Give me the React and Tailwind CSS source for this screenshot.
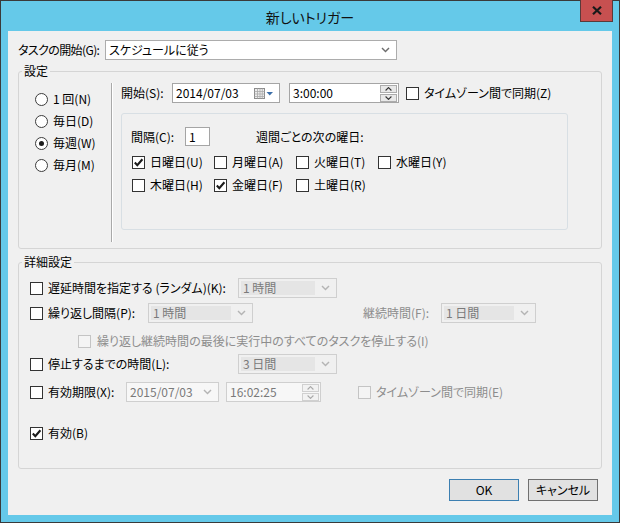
import React from 'react';
import clsx from 'clsx';

const Check = ({ checked, disabled }) => (
  <span
    className={clsx(
      'w-[13px] h-[13px] border flex items-center justify-center shrink-0',
      disabled ? 'border-[#c4c4c4] bg-[#f4f4f4]' : 'border-[#333333] bg-white'
    )}
  >
    {checked && (
      <svg width="11" height="11" viewBox="0 0 11 11">
        <path d="M1.8 5.6 L4.3 8.2 L9.4 2.2" stroke="#1b1b1b" strokeWidth="2.1" fill="none" />
      </svg>
    )}
  </span>
);

const Radio = ({ on }) => (
  <span className="w-[13px] h-[13px] rounded-full border border-[#3c3c3c] bg-white flex items-center justify-center shrink-0">
    {on && <span className="w-[5px] h-[5px] rounded-full bg-[#1b1b1b]" />}
  </span>
);

const Chevron = ({ light }) => (
  <svg width="9" height="6" viewBox="0 0 9 6" className="shrink-0">
    <path d="M1 1 L4.5 4.6 L8 1" stroke={light ? '#b4b4b4' : '#6d6d6d'} strokeWidth="1.4" fill="none" />
  </svg>
);

const Spin = ({ disabled }) => {
  const btn = clsx(
    'h-[8px] w-[17px] border flex items-center justify-center',
    disabled ? 'border-[#d0d0d0] bg-[#f2f2f2]' : 'border-[#acacac] bg-[#e8e8e8]'
  );
  const stroke = disabled ? '#a8a8a8' : '#333333';
  return (
    <div className="flex flex-col gap-[1px] mr-[1px]">
      <div className={btn}>
        <svg width="7" height="4" viewBox="0 0 7 4">
          <path d="M0.6 3.5 L3.5 0.6 L6.4 3.5" stroke={stroke} strokeWidth="1.1" fill="none" />
        </svg>
      </div>
      <div className={btn}>
        <svg width="7" height="4" viewBox="0 0 7 4">
          <path d="M0.6 0.5 L3.5 3.4 L6.4 0.5" stroke={stroke} strokeWidth="1.1" fill="none" />
        </svg>
      </div>
    </div>
  );
};

// disabled combo box as drawn by Win8
const DisabledSelect = ({ value, className }) => (
  <div className={clsx('h-[20px] border border-[#cfcfcf] bg-[#f0f0f0] flex items-center p-[2px] gap-[6px] pr-[6px] shrink-0', className)}>
    <div className="flex-1 h-full bg-[#e5e5e5] pl-[2px] text-[#7a7a7a] leading-[14px]">{value}</div>
    <Chevron light />
  </div>
);

const CheckRow = ({ checked, disabled, label, className }) => (
  <div className={clsx('flex items-center gap-[5px] shrink-0', className)}>
    <Check checked={checked} disabled={disabled} />
    <span className={clsx(disabled && 'text-[#8d8d8d]')}>{label}</span>
  </div>
);

const Group = ({ title, className, children }) => (
  <div className={clsx('relative border border-[#d5d5d5] rounded-[3px]', className)}>
    <span className="absolute left-[3px] -top-[9px] px-[2px] bg-[#f0f0f0] leading-[16px]">{title}</span>
    {children}
  </div>
);

const App = () => {
  const days = [
    [['日曜日(U)', true], ['月曜日(A)', false], ['火曜日(T)', false], ['水曜日(Y)', false]],
    [['木曜日(H)', false], ['金曜日(F)', true], ['土曜日(R)', false]],
  ];

  return (
    <div className="w-[620px] h-[523px] bg-[#65c9e9] border border-[#3a3a3a] relative flex flex-col whitespace-nowrap text-[12px] leading-[16px] text-black font-['Noto_Sans_CJK_JP','Meiryo_UI',sans-serif] [font-feature-settings:'palt']">
      {/* title bar */}
      <div className="h-[30px] flex items-center justify-center pt-[2px] text-[14px] text-[#111]">新しいトリガー</div>
      <button className="absolute -top-[1px] right-[6px] w-[33px] h-[22px] bg-[#c75050] border border-[#5a3a3a] border-t-0 flex items-center justify-center">
        <svg width="10" height="9" viewBox="0 0 10 9">
          <path d="M1 0.8 L9 8.2 M9 0.8 L1 8.2" stroke="#1a1a1a" strokeWidth="2.2" />
        </svg>
      </button>

      {/* client area */}
      <div className="mx-[7px] h-[484px] bg-[#f0f0f0] pt-[9px] px-[10px] flex flex-col">
        <div className="h-[20px] flex items-center">
          <span className="w-[87px] shrink-0 tracking-[-0.6px]">タスクの開始(G):</span>
          <div className="w-[292px] h-[20px] border border-[#acacac] bg-white flex items-center pl-[3px] pr-[6px]">
            <span className="flex-1">スケジュールに従う</span>
            <Chevron />
          </div>
        </div>

        {/* 設定 */}
        <Group title="設定" className="mt-[11px] h-[178px] flex">
          <div className="w-[92px] pt-[16px] pl-[16px] flex flex-col shrink-0">
            {[['1 回(N)', false], ['毎日(D)', false], ['毎週(W)', true], ['毎月(M)', false]].map(([label, on]) => (
              <div key={label} className="h-[22px] flex items-center gap-[5px]">
                <Radio on={on} />
                <span>{label}</span>
              </div>
            ))}
          </div>
          <div className="mt-[11px] h-[159px] w-[2px] border-l border-[#a9a9a9] border-r border-r-white" />
          <div className="ml-[8px] pt-[11px] flex flex-col">
            <div className="h-[20px] flex items-center">
              <span className="w-[51px] shrink-0">開始(S):</span>
              <div className="w-[108px] h-[20px] border border-[#a5a5a5] bg-white flex items-center pl-[3px] pr-[5px]">
                <span className="flex-1">2014/07/03</span>
                <svg width="20" height="11" viewBox="0 0 20 11">
                  <rect x="0.5" y="0.5" width="10" height="10" fill="#ececec" stroke="#8c8c8c" />
                  <path d="M0.5 3.5 H10.5 M0.5 6 H10.5 M0.5 8.5 H10.5 M3.5 0.5 V10.5 M6 0.5 V10.5 M8.3 0.5 V10.5" stroke="#a9a9a9" strokeWidth="0.8" />
                  <polygon points="12.5,4 19,4 15.75,7.5" fill="#3b6ea8" />
                </svg>
              </div>
              <div className="ml-[9px] w-[110px] h-[20px] border border-[#a5a5a5] bg-white flex items-center pl-[3px]">
                <span className="flex-1">3:00:00</span>
                <Spin />
              </div>
              <CheckRow label="タイムゾーン間で同期(Z)" className="ml-[7px]" />
            </div>

            <div className="mt-[10px] w-[447px] h-[117px] border border-[#d8dfe4] rounded-[3px] pt-[13px] pl-[9px] flex flex-col">
              <div className="h-[19px] flex items-center">
                <span className="w-[54px] shrink-0">間隔(C):</span>
                <div className="w-[25px] h-[19px] border border-[#a5a5a5] bg-white pl-[3px] flex items-center">1</div>
                <span className="ml-[46px]">週間ごとの次の曜日:</span>
              </div>
              {days.map((row, i) => (
                <div key={i} className={clsx('h-[20px] flex items-center pl-[1px]', i === 0 ? 'mt-[6px]' : 'mt-[3px]')}>
                  {row.map(([label, checked]) => (
                    <CheckRow key={label} label={label} checked={checked} className="w-[82px]" />
                  ))}
                </div>
              ))}
            </div>
          </div>
        </Group>

        {/* 詳細設定 */}
        <Group title="詳細設定" className="mt-[13px] h-[207px] pt-[15px] pl-[11px] flex flex-col">
          <div className="h-[20px] flex items-center">
            <CheckRow label="遅延時間を指定する (ランダム)(K):" className="w-[208px]" />
            <DisabledSelect value="1 時間" className="w-[99px]" />
          </div>
          <div className="mt-[5px] h-[20px] flex items-center">
            <CheckRow label="繰り返し間隔(P):" className="w-[118px]" />
            <DisabledSelect value="1 時間" className="w-[105px]" />
            <span className="ml-[110px] w-[78px] shrink-0 text-[#8d8d8d]">継続時間(F):</span>
            <DisabledSelect value="1 日間" className="w-[95px]" />
          </div>
          <div className="mt-[8px] h-[20px] flex items-center pl-[48px]">
            <CheckRow label="繰り返し継続時間の最後に実行中のすべてのタスクを停止する(I)" disabled className="gap-[6px]" />
          </div>
          <div className="mt-[3px] h-[20px] flex items-center">
            <CheckRow label="停止するまでの時間(L):" className="w-[208px]" />
            <DisabledSelect value="3 日間" className="w-[99px]" />
          </div>
          <div className="mt-[8px] h-[20px] flex items-center">
            <CheckRow label="有効期限(X):" className="w-[96px]" />
            <div className="w-[93px] h-[20px] border border-[#cfcfcf] bg-[#f7f7f7] flex items-center pl-[3px] pr-[6px] text-[#7a7a7a]">
              <span className="flex-1">2015/07/03</span>
              <Chevron light />
            </div>
            <div className="ml-[7px] w-[95px] h-[20px] border border-[#cfcfcf] bg-[#f7f7f7] flex items-center pl-[3px] text-[#7a7a7a]">
              <span className="flex-1">16:02:25</span>
              <Spin disabled />
            </div>
            <CheckRow label="タイムゾーン間で同期(E)" disabled className="ml-[37px]" />
          </div>
          <div className="mt-[21px] h-[20px] flex items-center">
            <CheckRow label="有効(B)" checked />
          </div>
        </Group>

        <div className="mt-[10px] flex justify-end gap-[9px] pr-[4px]">
          <button className="w-[70px] h-[22px] border border-[#3c7fb1] bg-[#e1e1e1]">OK</button>
          <button className="w-[70px] h-[22px] border border-[#707070] bg-[#e1e1e1]">キャンセル</button>
        </div>
      </div>
    </div>
  );
};

export default App;
